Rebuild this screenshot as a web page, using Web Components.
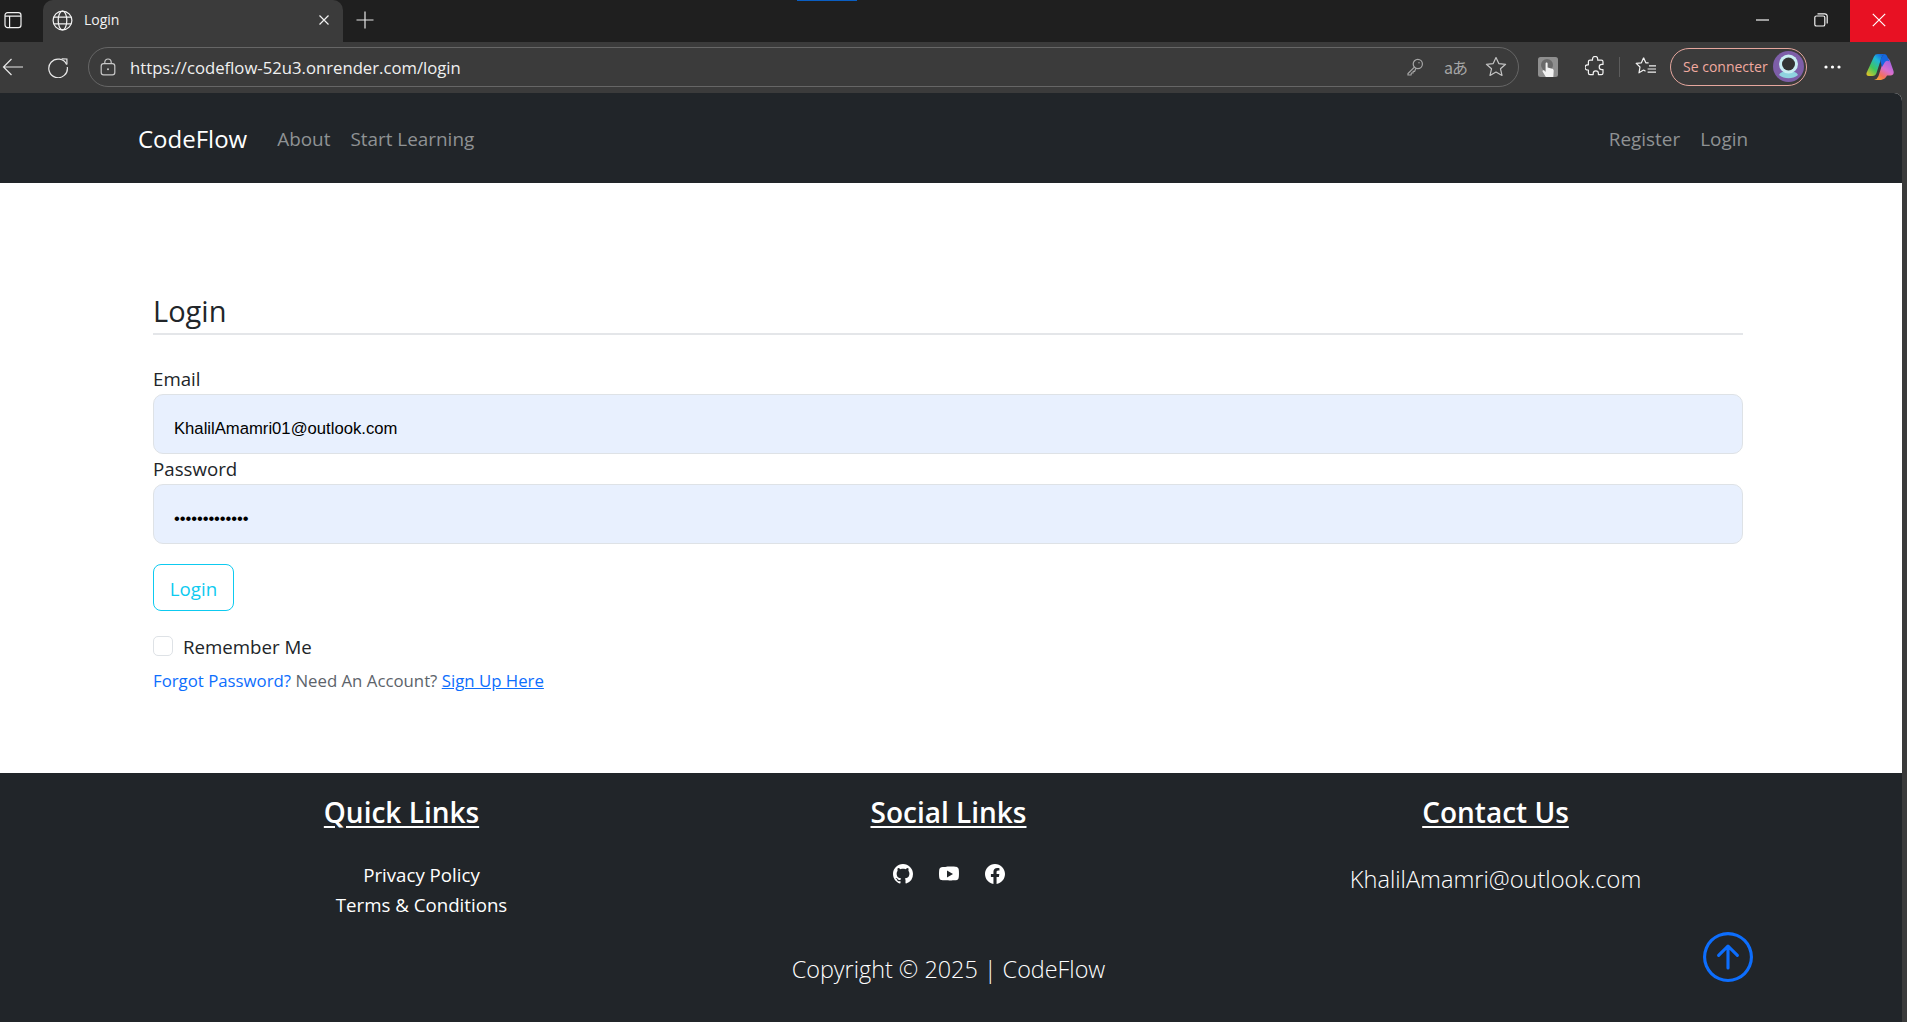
<!DOCTYPE html>
<html lang="en">
<head>
<meta charset="utf-8">
<title>Login</title>
<style>
  html, body { margin: 0; height: 100%; }
  body {
    background: #3b3b3b;
    font-family: "Open Sans", "Noto Sans", sans-serif;
    overflow: hidden;
    display: flex;
    flex-direction: column;
    height: 1022px;
  }
</style>
</head>
<body>
<browser-chrome url="https://codeflow-52u3.onrender.com/login" tab-title="Login"></browser-chrome>
<site-page>
  <site-nav slot="nav" brand="CodeFlow">
    <a slot="left" href="#">About</a>
    <a slot="left" href="#">Start Learning</a>
    <a slot="right" href="#">Register</a>
    <a slot="right" href="#">Login</a>
  </site-nav>
  <login-form slot="main"></login-form>
  <site-footer slot="footer"></site-footer>
</site-page>

<script>
// Edge window frame: tab strip and toolbar
class BrowserChrome extends HTMLElement {
  constructor() {
    super();
    this.attachShadow({ mode: 'open' });
  }
  connectedCallback() {
    const url = this.getAttribute('url');
    const title = this.getAttribute('tab-title');
    this.shadowRoot.innerHTML = `
      <style>
        :host { display: block; position: relative; font-family: "Open Sans", sans-serif; color: #fff; flex: none; }
        svg { display: block; fill: none; stroke: currentColor; stroke-width: 1.2; }
        .strip { height: 42px; background: #1f1f1f; display: flex; align-items: stretch; }
        .panel { width: 43px; display: flex; align-items: center; padding: 0 0 2px 4px; box-sizing: border-box; color: #f2f2f2; }
        .tab { width: 300px; background: #3b3b3b; border-radius: 10px 10px 0 0; display: flex; align-items: center; box-sizing: border-box; padding: 0 13px 2px 9px; font-size: 14px; color: #f2f2f2; }
        .tab span { flex: 1; margin: 0 0 2px 11px; }
        .plus { margin-left: 13px; display: flex; align-items: center; padding-bottom: 2px; color: #e6e6e6; }
        .win { margin-left: auto; display: flex; }
        .win div { display: flex; align-items: center; justify-content: center; width: 58px; padding-bottom: 2px; box-sizing: border-box; color: #f2f2f2; }
        .win .close { width: 57px; background: #e81123; color: #fff; }
        .sliver { position: absolute; left: 797px; top: 0; width: 60px; height: 1px; background: #0a5ec2; }
        .bar { height: 51px; background: #3b3b3b; display: flex; align-items: center; box-sizing: border-box; padding-bottom: 2px; color: #e8e8e8; }
        .nav-btn { display: flex; justify-content: center; flex: none; }
        .back { width: 26px; }
        .reload { width: 52px; margin-left: 6px; }
        .omni { width: 1431px; height: 40px; margin-left: 4px; border: 1.5px solid #666; border-radius: 20px; box-sizing: border-box; display: flex; align-items: center; padding: 0 11px 0 11px; flex: none; }
        .omni .text { font-size: 16.7px; margin-left: 14px; padding-top: 1px; color: #f0f0f0; flex: 1; }
        .omni svg { color: #a6a6a6; }
        .omni .lock { color: #c8c8c8; }
        .omni .star { color: #c4c4c4; margin-left: 19px; }
        .omni .tr { margin-left: 20px; }
        .ext { margin-left: 19px; flex: none; }
        .puzzle { margin-left: 27px; flex: none; }
        .sep { width: 1px; height: 20px; background: #5c5c5c; margin: 0 15px 0 14px; flex: none; }
        .pill { margin-left: 13px; width: 137px; height: 38px; box-sizing: border-box; border: 1.5px solid #e6a79e; border-radius: 19px; display: flex; align-items: center; padding: 0 2px 0 12px; color: #f1aaa0; font-size: 14px; flex: none; justify-content: space-between; }
        .more { margin-left: 17px; flex: none; color: #fff; }
        .copilot { margin-left: 25px; flex: none; }
      </style>
      <div class="strip">
        <div class="panel">
          <svg width="18" height="18" viewBox="0 0 18 18" stroke-width="1.6"><rect x="1" y="1.6" width="16" height="15" rx="2.6"/><path d="M1 5.2H17M5.6 5.2V16.6" /></svg>
        </div>
        <div class="tab">
          <svg width="21" height="21" viewBox="0 0 21 21"><circle cx="10.5" cy="10.5" r="9.4"/><ellipse cx="10.5" cy="10.5" rx="4.3" ry="9.4"/><path d="M1.8 7.2H19.2M1.8 13.8H19.2"/></svg>
          <span>${title}</span>
          <svg width="12" height="12" viewBox="0 0 12 12" stroke-width="1.5"><path d="M1.5 1.5L10.5 10.5M10.5 1.5L1.5 10.5"/></svg>
        </div>
        <div class="plus">
          <svg width="18" height="18" viewBox="0 0 18 18"><path d="M9 .5V17.5M.5 9H17.5"/></svg>
        </div>
        <div class="win">
          <div><svg width="14" height="2" viewBox="0 0 14 2"><path d="M0 1H13"/></svg></div>
          <div><svg width="14" height="14" viewBox="0 0 14 14"><rect x=".8" y="3" width="10" height="10" rx="1.6"/><path d="M3.5 .8H10.8A2.4 2.4 0 0 1 13.2 3.2V10.5"/></svg></div>
          <div class="close"><svg width="14" height="14" viewBox="0 0 14 14" stroke-width="1.3"><path d="M.8 .8L13.2 13.2M13.2 .8L.8 13.2"/></svg></div>
        </div>
      </div>
      <div class="sliver"></div>
      <div class="bar">
        <div class="nav-btn back"><svg width="22" height="18" viewBox="0 0 22 18"><path d="M21 9H1.5M9.5 1L1.5 9L9.5 17"/></svg></div>
        <div class="nav-btn reload"><svg width="22" height="22" viewBox="0 0 22 22"><path d="M19.6 8.6A9.3 9.3 0 1 0 20.3 11"/><path d="M14.6 2.8L19.9 3V8.4" /></svg></div>
        <div class="omni">
          <svg class="lock" width="16" height="18" viewBox="0 0 16 18"><rect x="1.2" y="5.6" width="13.6" height="11.2" rx="2.4"/><path d="M4.8 5.6V4.2a3.2 3.2 0 0 1 6.4 0V5.6"/><circle cx="8" cy="11.2" r="1" fill="currentColor" stroke="none"/></svg>
          <span class="text">${url}</span>
          <svg width="18" height="18" viewBox="0 0 18 18"><circle cx="11.8" cy="6" r="4.6"/><path d="M8.4 9.2L2 15.6V17H5L5.4 15H7L7.2 13.4H8.6L9.8 10.6"/><circle cx="13" cy="4.8" r=".7" fill="currentColor" stroke="none"/></svg>
          <span class="tr" style="font-size:16px;color:#a6a6a6;width:22px;white-space:nowrap;letter-spacing:-1px;font-family:'Noto Sans CJK JP',sans-serif;">aあ</span>
          <svg class="star" width="22" height="21" viewBox="0 0 22 21" stroke-width="1.4"><path d="M11 1.5L13.8 7.6L20.6 8.3L15.5 12.8L17 19.4L11 16L5 19.4L6.5 12.8L1.4 8.3L8.2 7.6Z" stroke-linejoin="round"/></svg>
        </div>
        <svg class="ext" width="20" height="20" viewBox="0 0 20 20" style="stroke:none"><rect width="20" height="20" rx="2.5" fill="#8f8f8f"/><circle cx="9" cy="8" r="6" fill="#6a6a6a"/><path d="M7.6 6.4c0-1.3 2-1.3 2 0V10.6l4.6 1.2c1.2.4 1.6 1.2 1.5 2.3L15.3 20H7.8L4.6 14.6c-.6-1.1.8-2 1.6-1.1L7.6 15Z" fill="#f2f2f2"/></svg>
        <svg class="puzzle" width="20" height="21" viewBox="0 0 20 21" stroke-width="1.4" style="color:#f2f2f2"><path d="M7.5 4.2V3a2.6 2.6 0 0 1 5.2 0V4.2H16.4A1.6 1.6 0 0 1 18 5.8V8.4H16.8a2.6 2.6 0 0 0 0 5.2H18V17a1.6 1.6 0 0 1-1.6 1.6H13.4V17.4a2.6 2.6 0 0 0-5.2 0V18.6H5A1.6 1.6 0 0 1 3.4 17V14H2.6a2.6 2.6 0 0 1 0-5.2H3.4V5.8A1.6 1.6 0 0 1 5 4.2Z" stroke-linejoin="round"/></svg>
        <div class="sep"></div>
        <svg width="22" height="21" viewBox="0 0 22 21" style="flex:none;color:#f2f2f2" stroke-width="1.4"><path d="M8.6 1.8L10.8 6.8H13.6M8.6 1.8L6.4 6.8L1.2 7.4L5 11L4 16.8L8.6 14L10.5 15.2" stroke-linejoin="round"/><path d="M14 9.8H21M12.6 13H21M12.6 16.2H21"/></svg>
        <div class="pill">
          <span>Se connecter</span>
          <svg width="31" height="31" viewBox="0 0 31 31" style="stroke:none"><circle cx="15.5" cy="15.5" r="15.5" fill="#7d5ea8"/><path d="M6 24C7.5 21 10.5 20 15.5 20S23.5 21 25 24A15.5 15.5 0 0 1 6 24Z" fill="#8fd3df"/><circle cx="15.5" cy="13" r="9.5" fill="#c9edf2"/><circle cx="15.5" cy="13" r="6.5" fill="#333"/></svg>
        </div>
        <svg class="more" width="17" height="4" viewBox="0 0 17 4" style="stroke:none;fill:currentColor"><circle cx="2" cy="2" r="1.6"/><circle cx="8.5" cy="2" r="1.6"/><circle cx="15" cy="2" r="1.6"/></svg>
        <svg class="copilot" width="28" height="26" viewBox="0 0 28 26" style="stroke:none">
          <defs>
            <linearGradient id="cpa" x1="0" y1="1" x2=".75" y2="0"><stop offset="0" stop-color="#f9c21e"/><stop offset=".4" stop-color="#3fc65f"/><stop offset=".75" stop-color="#1fb6d8"/><stop offset="1" stop-color="#1567e0"/></linearGradient>
            <linearGradient id="cpb" x1=".85" y1="0" x2=".25" y2="1"><stop offset="0" stop-color="#8f5fe8"/><stop offset=".5" stop-color="#d86fd0"/><stop offset=".8" stop-color="#f4705a"/><stop offset="1" stop-color="#f2a03a"/></linearGradient>
          </defs>
          <path d="M8 2.4Q9 0 12 0H19Q16 1 15 5L10.5 19Q9.5 22 6.5 22H3Q0 22 .5 19Z" fill="url(#cpa)"/>
          <path d="M20.5 4Q23 4 24 7L27.5 17Q28.5 21 25 21.5H21Q19.5 25 15 26H8Q11.5 25 12.5 22L16 11Q17.5 7 20.5 4Z" fill="url(#cpb)"/>
          <path d="M12 0H18Q20.5 0 21.5 3L23.5 7.5Q21 6 19 8L16 13L14.4 7Q15.5 1.5 19 0Z" fill="#1567e0"/>
        </svg>
      </div>`;
  }
}
customElements.define('browser-chrome', BrowserChrome);

// The part of the window the site draws in, leaves the thin frame on the right
class SitePage extends HTMLElement {
  constructor() {
    super();
    this.attachShadow({ mode: 'open' });
    this.shadowRoot.innerHTML = `
      <style>
        :host { display: flex; flex-direction: column; flex: 1; margin-right: 5px; min-height: 0; background: #fff; border-radius: 0 8px 0 0; overflow: hidden; }
        ::slotted([slot=main]) { flex: 1; }
      </style>
      <slot name="nav"></slot>
      <slot name="main"></slot>
      <slot name="footer"></slot>`;
  }
}
customElements.define('site-page', SitePage);

class SiteNav extends HTMLElement {
  constructor() {
    super();
    this.attachShadow({ mode: 'open' });
  }
  connectedCallback() {
    this.shadowRoot.innerHTML = `
      <style>
        :host { display: flex; align-items: center; height: 90px; background: #212529; padding: 0 154px 0 138px; font-size: 18.9px; }
        .brand { color: #fff; font-size: 24px; margin-right: 30px; }
        .links { display: flex; gap: 20px; padding-top: 2px; }
        .right { margin-left: auto; }
        ::slotted(a) { color: #8f9294; text-decoration: none; }
      </style>
      <span class="brand">${this.getAttribute('brand')}</span>
      <div class="links"><slot name="left"></slot></div>
      <div class="links right"><slot name="right"></slot></div>`;
  }
}
customElements.define('site-nav', SiteNav);

class FormField extends HTMLElement {
  constructor() {
    super();
    this.attachShadow({ mode: 'open' });
    this.shadowRoot.innerHTML = `
      <style>
        :host { display: block; }
        label { display: block; font-size: 18.7px; line-height: 30px; color: #212529; }
        .box {
          height: 60px; box-sizing: border-box; padding: 9px 20px 0;
          display: flex; align-items: center;
          background: #e8f0fe; border: 1px solid #dee2e6; border-radius: 10px;
          font: 16.67px "Liberation Sans", Arial, sans-serif; color: #000;
        }
      </style>
      <label></label>
      <div class="box" role="textbox"><slot></slot></div>`;
  }
  connectedCallback() {
    this.shadowRoot.querySelector('label').textContent = this.getAttribute('label');
  }
}
customElements.define('form-field', FormField);

class LoginForm extends HTMLElement {
  constructor() {
    super();
    this.attachShadow({ mode: 'open' });
    this.shadowRoot.innerHTML = `
      <style>
        :host { display: block; padding: 105px 159px 0 153px; font-size: 18.7px; color: #212529; }
        h2 { font-weight: 400; font-size: 29px; line-height: 45px; margin: 0; border-bottom: 2px solid #e4e6e9; height: 45px; }
        .fields { margin-top: 29px; }
        button {
          display: block; margin-top: 20px; width: 81px; height: 47px; padding: 2px 0 0;
          background: none; border: 1.5px solid #0dcaf0; border-radius: 8px; color: #0dcaf0;
          font: inherit;
        }
        .check { display: flex; align-items: center; margin-top: 20px; height: 30px; }
        .check i { width: 20px; height: 20px; box-sizing: border-box; border: 1px solid #dee2e6; border-radius: 5px; margin-right: 10px; }
        .more { font-size: 16.8px; line-height: 26px; margin-top: 7px; color: #5c636a; }
        .more a { color: #0d6efd; text-decoration: none; }
        .more a.u { text-decoration: underline; }
      </style>
      <h2>Login</h2>
      <div class="fields">
        <form-field label="Email">KhalilAmamri01@outlook.com</form-field>
        <form-field label="Password"><span style="letter-spacing:-.1px">•••••••••••••</span></form-field>
      </div>
      <button type="button">Login</button>
      <div class="check"><i></i><span>Remember Me</span></div>
      <div class="more"><a href="#">Forgot Password?</a> Need An Account? <a class="u" href="#">Sign Up Here</a></div>`;
  }
}
customElements.define('login-form', LoginForm);

class SiteFooter extends HTMLElement {
  constructor() {
    super();
    this.attachShadow({ mode: 'open' });
    this.shadowRoot.innerHTML = `
      <style>
        :host { display: block; position: relative; height: 249px; box-sizing: border-box; background: #212529; color: #fff; padding: 19px 133px 0 128px; }
        .cols { display: grid; grid-template-columns: repeat(3, 1fr); text-align: center; height: 158px; }
        h3 { margin: 0 0 28px; font-size: 28px; font-weight: 600; line-height: 40px; text-decoration: underline; text-underline-offset: 3px; }
        ul { list-style: none; margin: 0; padding: 0 0 0 40px; font-size: 18.7px; line-height: 30px; }
        .social { display: flex; justify-content: center; gap: 26px; padding-top: 4px; }
        .social svg { display: block; width: 20px; height: 20px; fill: #fff; }
        .mail { font-size: 23.6px; font-weight: 300; line-height: 32px; padding-top: 3px; }
        .copy { text-align: center; font-size: 23.4px; font-weight: 300; line-height: 38px; }
        .top { position: absolute; left: 1703px; top: 159px; width: 50px; height: 50px; color: #0d6efd; }
      </style>
      <div class="cols">
        <div>
          <h3>Quick Links</h3>
          <ul><li>Privacy Policy</li><li>Terms &amp; Conditions</li></ul>
        </div>
        <div>
          <h3>Social Links</h3>
          <div class="social">
            <svg viewBox="0 0 16 16"><path d="M8 0C3.58 0 0 3.58 0 8c0 3.54 2.29 6.53 5.47 7.59.4.07.55-.17.55-.38 0-.19-.01-.82-.01-1.49-2.01.37-2.53-.49-2.69-.94-.09-.23-.48-.94-.82-1.13-.28-.15-.68-.52-.01-.53.63-.01 1.08.58 1.23.82.72 1.21 1.87.87 2.33.66.07-.52.28-.87.51-1.07-1.78-.2-3.64-.89-3.64-3.95 0-.87.31-1.59.82-2.15-.08-.2-.36-1.02.08-2.12 0 0 .67-.21 2.2.82.64-.18 1.32-.27 2-.27s1.36.09 2 .27c1.53-1.04 2.2-.82 2.2-.82.44 1.1.16 1.92.08 2.12.51.56.82 1.27.82 2.15 0 3.07-1.87 3.75-3.65 3.95.29.25.54.73.54 1.48 0 1.07-.01 1.93-.01 2.2 0 .21.15.46.55.38A8.01 8.01 0 0 0 16 8c0-4.42-3.58-8-8-8z"/></svg>
            <svg viewBox="0 0 16 16"><path d="M8.05 2h.09c.82 0 4.98.03 6.1.33a2 2 0 0 1 1.42 1.42c.1.38.17.88.22 1.4l.01.1.02.27.01.1c.06.9.07 1.75.07 1.93v.07c0 .19-.01 1.08-.08 2.01l-.01.1-.01.1c-.05.56-.12 1.11-.23 1.52a2 2 0 0 1-1.42 1.42c-1.16.31-5.56.33-6.17.33H7.93c-.31 0-1.59-.01-2.93-.05l-.17-.01-.09-.01-.17-.01-.17-.01c-1.11-.05-2.17-.13-2.66-.26a2 2 0 0 1-1.42-1.42c-.11-.41-.18-.96-.23-1.52l-.01-.1-.01-.1A31 31 0 0 1 0 8.07v-.14C0 7.75.01 6.9.07 6l.01-.1v-.1l.02-.27.01-.1c.05-.52.12-1.02.22-1.4a2 2 0 0 1 1.42-1.42c.49-.13 1.55-.2 2.66-.25l.17-.01.17-.01.09-.01.17-.01C6.3 2.03 7.58 2.01 7.89 2zM6.4 5.2v5.6L11.2 8z"/></svg>
            <svg viewBox="0 0 16 16"><path d="M16 8.05C16 3.6 12.42 0 8 0S0 3.6 0 8.05c0 4.02 2.93 7.35 6.75 7.95v-5.62H4.72V8.05h2.03V6.28c0-2.02 1.2-3.13 3.02-3.13.88 0 1.79.16 1.79.16v1.98h-1c-1 0-1.31.62-1.31 1.26v1.5h2.22l-.35 2.33H9.25V16C13.07 15.4 16 12.07 16 8.05z"/></svg>
          </div>
        </div>
        <div>
          <h3>Contact Us</h3>
          <div class="mail">KhalilAmamri@outlook.com</div>
        </div>
      </div>
      <div class="copy">Copyright © 2025 | CodeFlow</div>
      <svg class="top" viewBox="0 0 16 16" fill="currentColor"><path fill-rule="evenodd" d="M1 8a7 7 0 1 0 14 0A7 7 0 0 0 1 8zm15 0A8 8 0 1 1 0 8a8 8 0 0 1 16 0zm-7.5 3.5a.5.5 0 0 1-1 0V5.707L5.354 7.854a.5.5 0 1 1-.708-.708l3-3a.5.5 0 0 1 .708 0l3 3a.5.5 0 0 1-.708.708L8.5 5.707V11.5z"/></svg>`;
  }
}
customElements.define('site-footer', SiteFooter);
</script>
</body>
</html>
